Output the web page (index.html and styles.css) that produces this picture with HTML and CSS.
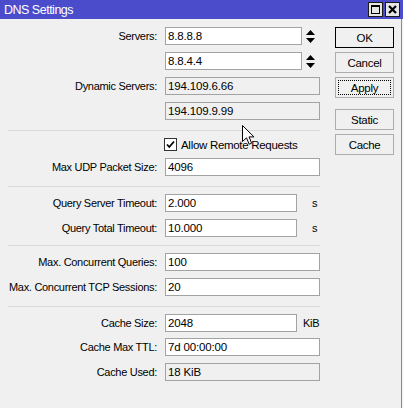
FILE: index.html
```html
<!DOCTYPE html>
<html>
<head>
<meta charset="utf-8">
<link rel="stylesheet" href="styles.css">
</head>
<body>
<div class="titlebar">
  <span class="title">DNS Settings</span>
  <div class="tbuttons">
    <span class="tbtn"><svg width="13" height="13" viewBox="0 0 13 13"><rect x="2.5" y="2.5" width="8" height="8" fill="none" stroke="#000" stroke-width="1"/><rect x="2" y="2" width="9" height="2" fill="#000"/></svg></span>
    <span class="tbtn"><svg width="13" height="13" viewBox="0 0 13 13"><path d="M3 3 L10 10 M10 3 L3 10" stroke="#000" stroke-width="2.2"/></svg></span>
  </div>
</div>
<div class="content">
  <div class="form">
    <div class="row">
      <label>Servers:</label>
      <div class="field"><div class="input w137">8.8.8.8</div><svg class="updown" width="9" height="13" viewBox="0 0 9 13"><path d="M4.5 0 L9 5 L0 5 Z M0 8 L9 8 L4.5 13 Z" fill="#000"/></svg></div>
    </div>
    <div class="row">
      <label></label>
      <div class="field"><div class="input w137">8.8.4.4</div><svg class="updown" width="9" height="13" viewBox="0 0 9 13"><path d="M4.5 0 L9 5 L0 5 Z M0 8 L9 8 L4.5 13 Z" fill="#000"/></svg></div>
    </div>
    <div class="row">
      <label>Dynamic Servers:</label>
      <div class="field"><div class="input ro w155">194.109.6.66</div></div>
    </div>
    <div class="row">
      <label></label>
      <div class="field"><div class="input ro w155">194.109.9.99</div></div>
    </div>
    <div class="sep"></div>
    <div class="row cbrow">
      <label></label>
      <div class="field"><span class="checkbox"><svg width="11" height="11" viewBox="0 0 11 11"><path d="M2 5.5 L4.3 8 L9 2.5" fill="none" stroke="#000" stroke-width="1.8"/></svg></span><span class="cblabel">Allow Remote Requests</span></div>
    </div>
    <div class="row">
      <label>Max UDP Packet Size:</label>
      <div class="field"><div class="input w155">4096</div></div>
    </div>
    <div class="sep"></div>
    <div class="row">
      <label>Query Server Timeout:</label>
      <div class="field"><div class="input w132">2.000</div><span class="unit us">s</span></div>
    </div>
    <div class="row">
      <label>Query Total Timeout:</label>
      <div class="field"><div class="input w132">10.000</div><span class="unit us">s</span></div>
    </div>
    <div class="sep tight"></div>
    <div class="row">
      <label>Max. Concurrent Queries:</label>
      <div class="field"><div class="input w155">100</div></div>
    </div>
    <div class="row">
      <label>Max. Concurrent TCP Sessions:</label>
      <div class="field"><div class="input w155">20</div></div>
    </div>
    <div class="sep"></div>
    <div class="row">
      <label>Cache Size:</label>
      <div class="field"><div class="input w132">2048</div><span class="unit ukib">KiB</span></div>
    </div>
    <div class="row close">
      <label>Cache Max TTL:</label>
      <div class="field"><div class="input w155">7d 00:00:00</div></div>
    </div>
    <div class="row">
      <label>Cache Used:</label>
      <div class="field"><div class="input ro w155">18 KiB</div></div>
    </div>
  </div>
  <div class="buttons">
    <div class="btn default">OK</div>
    <div class="btn">Cancel</div>
    <div class="btn focus"><span class="focusring">Apply</span></div>
    <div class="btn gapbefore">Static</div>
    <div class="btn">Cache</div>
  </div>
  <svg class="cursor" width="13" height="21" viewBox="0 0 13 21"><path d="M0.5 0.5 L0.5 16.5 L4.5 12.8 L7.2 19.2 L9.6 18.2 L7 11.9 L12 11.9 Z" fill="#fff" stroke="#000" stroke-width="1" stroke-linejoin="miter"/></svg>
</div>
</body>
</html>
```
FILE: styles.css
```css
html, body {
  margin: 0;
  padding: 0;
  background: #f0f0f0;
}
body {
  width: 403px;
  height: 408px;
  overflow: hidden;
  font-family: "Liberation Sans", Arial, sans-serif;
  font-size: 11px;
  letter-spacing: -0.3px;
  color: #000;
}
.titlebar {
  height: 19px;
  background: #4b4ccb;
  display: flex;
  align-items: center;
  justify-content: space-between;
}
.title {
  color: #fff;
  font-size: 12.5px;
  letter-spacing: -0.5px;
  padding-left: 4px;
}
.tbuttons {
  display: flex;
  gap: 2px;
  padding-right: 3px;
}
.tbtn {
  width: 15px;
  height: 15px;
  box-sizing: border-box;
  border: 1px solid #1a1a1a;
  background: #e6e6e6;
  display: flex;
  align-items: center;
  justify-content: center;
}
.content {
  position: relative;
  display: flex;
  width: 402px;
  height: 389px;
  box-sizing: border-box;
  border-right: 1px solid #8c8c8c;
  padding-top: 8px;
}
.form {
  width: 312px;
  padding-left: 8px;
  display: flex;
  flex-direction: column;
  gap: 7px;
}
.row {
  display: grid;
  grid-template-columns: 149px auto;
  column-gap: 8px;
  align-items: center;
  height: 18px;
}
.row.close {
  margin-top: -1px;
}
.row label {
  text-align: right;
  white-space: nowrap;
}
.field {
  display: flex;
  align-items: center;
}
.input {
  height: 18px;
  box-sizing: border-box;
  border: 1px solid #a3a3a3;
  background: #fff;
  padding-left: 2px;
  line-height: 16px;
  white-space: nowrap;
  font-size: 11.5px;
  letter-spacing: -0.15px;
}
.input.ro {
  background: #f0f0f0;
}
.w137 { width: 137px; }
.w155 { width: 155px; }
.w132 { width: 132px; }
.updown {
  margin-left: 4px;
}
.unit.us { margin-left: 15px; }
.unit.ukib { margin-left: 6px; }
.sep {
  height: 1px;
  background: #d9d9d9;
  margin-top: 3px;
  width: 312px;
}
.sep.tight {
  margin-top: 1px;
}
.cbrow {
  height: 13px;
}
.checkbox {
  width: 13px;
  height: 13px;
  box-sizing: border-box;
  border: 1px solid #333;
  background: #fff;
  display: flex;
  align-items: center;
  justify-content: center;
  margin-left: -1px;
}
.cblabel {
  margin-left: 4px;
  font-size: 11.5px;
}
.buttons {
  margin-left: 15px;
  display: flex;
  flex-direction: column;
  gap: 4px;
}
.btn {
  width: 59px;
  height: 21px;
  box-sizing: border-box;
  border: 1px solid #adadad;
  background: #f0f0f0;
  display: flex;
  align-items: center;
  justify-content: center;
  font-size: 11.5px;
}
.btn.default {
  border-color: #000;
}
.btn.focus {
  padding: 2px;
}
.focusring {
  flex: 1;
  align-self: stretch;
  border: 1px dotted #000;
  display: flex;
  align-items: center;
  justify-content: center;
}
.btn.gapbefore {
  margin-top: 7px;
}
.cursor {
  position: absolute;
  left: 242px;
  top: 106px;
}
```
